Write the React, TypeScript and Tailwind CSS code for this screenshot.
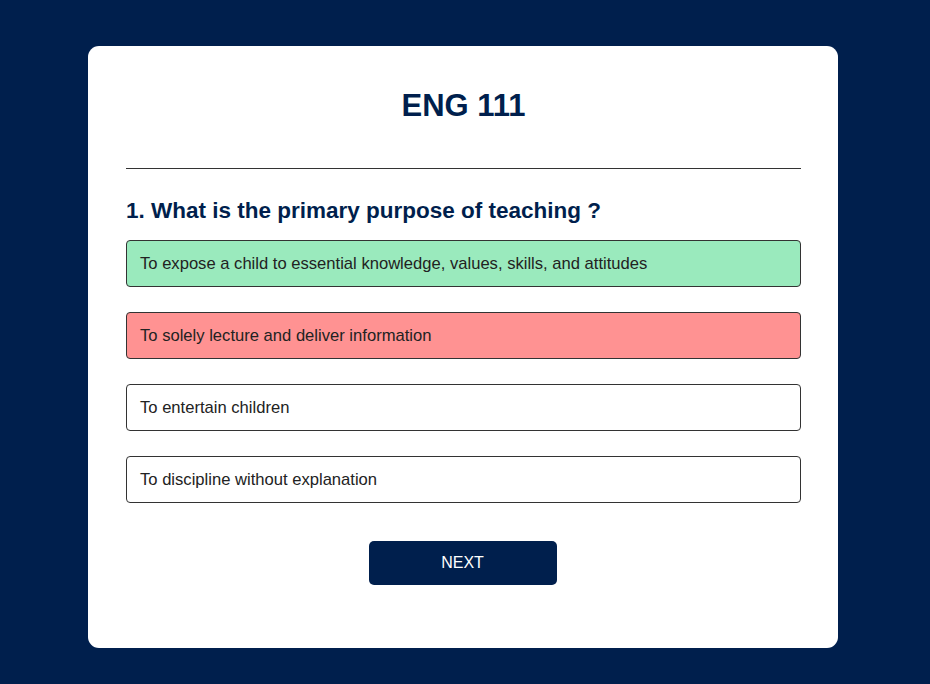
const options = [
  { text: "To expose a child to essential knowledge, values, skills, and attitudes", state: "correct" },
  { text: "To solely lecture and deliver information", state: "wrong" },
  { text: "To entertain children", state: "none" },
  { text: "To discipline without explanation", state: "none" },
]

export default function App() {
  return (
    <div
      className="min-h-[684px] w-full bg-[#001f4d] pt-[46px] pb-[36px]"
      style={{ fontFamily: '"Liberation Sans", Arial, sans-serif' }}
    >
      <div className="ml-[88px] w-[750px] rounded-[11px] bg-white pl-[38px] pr-[37px] pt-[42px] pb-[63px]">
        <h1 className="text-center text-[31px] leading-[36px] font-bold text-[#001f4d]">ENG 111</h1>
        <hr className="mt-[44px] border-0 border-t border-[#333]" />
        <h2 className="mt-[29px] text-[22.5px] leading-[26px] font-bold text-[#001f4d]">
          1. What is the primary purpose of teaching ?
        </h2>
        <div className="mt-[16px] flex flex-col gap-[25px]">
          {options.map((opt) => (
            <div
              key={opt.text}
              className={
                "rounded-[4px] border border-[#333] px-[13px] py-[12.5px] text-[16.6px] leading-5 text-[#222] " +
                (opt.state === "correct"
                  ? "bg-[#9aeabd]"
                  : opt.state === "wrong"
                  ? "bg-[#ff9292]"
                  : "bg-white")
              }
            >
              {opt.text}
            </div>
          ))}
        </div>
        <div className="mt-[38px] flex justify-center pr-[2px]">
          <button className="h-[44px] w-[188px] rounded-[5px] bg-[#001f4d] text-[16px] text-white">
            NEXT
          </button>
        </div>
      </div>
    </div>
  )
}
